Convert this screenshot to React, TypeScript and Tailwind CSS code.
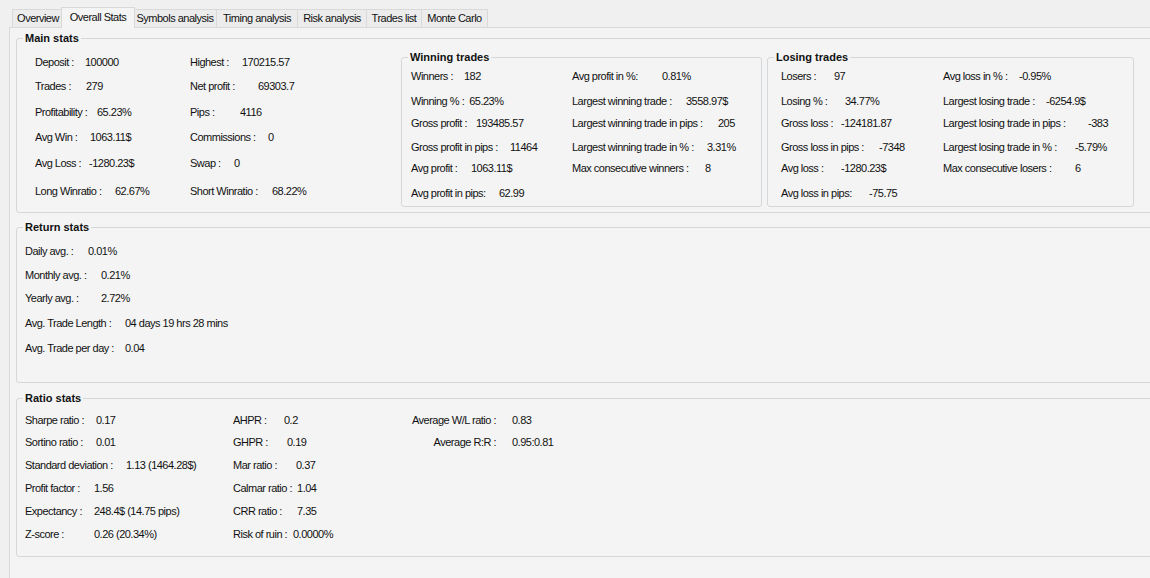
import type { ReactNode } from "react";

type Stat = { label: string; value: string; w: string };

const TABS = [
  { name: "Overview", w: "w-[51px]" },
  { name: "Overall Stats", w: "w-[74px]", active: true },
  { name: "Symbols analysis", w: "w-[83px]" },
  { name: "Timing analysis", w: "w-[81px]" },
  { name: "Risk analysis", w: "w-[69px]" },
  { name: "Trades list", w: "w-[55px]" },
  { name: "Monte Carlo", w: "w-[67px]" },
];

const mainLeft: Stat[] = [
  { label: "Deposit :", value: "100000", w: "min-w-[50px]" },
  { label: "Trades :", value: "279", w: "min-w-[51px]" },
  { label: "Profitability :", value: "65.23%", w: "min-w-[62px]" },
  { label: "Avg Win :", value: "1063.11$", w: "min-w-[55px]" },
  { label: "Avg Loss :", value: "-1280.23$", w: "min-w-[54px]" },
  { label: "Long Winratio :", value: "62.67%", w: "min-w-[80px]" },
];

const mainRight: Stat[] = [
  { label: "Highest :", value: "170215.57", w: "min-w-[52px]" },
  { label: "Net profit :", value: "69303.7", w: "min-w-[68px]" },
  { label: "Pips :", value: "4116", w: "min-w-[50px]" },
  { label: "Commissions :", value: "0", w: "min-w-[78px]" },
  { label: "Swap :", value: "0", w: "min-w-[44px]" },
  { label: "Short Winratio :", value: "68.22%", w: "min-w-[82px]" },
];

const winLeft: Stat[] = [
  { label: "Winners :", value: "182", w: "min-w-[53px]" },
  { label: "Winning % :", value: "65.23%", w: "min-w-[46px]" },
  { label: "Gross profit :", value: "193485.57", w: "min-w-[65px]" },
  { label: "Gross profit in pips :", value: "11464", w: "min-w-[99px]" },
  { label: "Avg profit :", value: "1063.11$", w: "min-w-[60px]" },
  { label: "Avg profit in pips:", value: "62.99", w: "min-w-[88px]" },
];

const winRight: Stat[] = [
  { label: "Avg profit in %:", value: "0.81%", w: "min-w-[90px]" },
  { label: "Largest winning trade :", value: "3558.97$", w: "min-w-[114px]" },
  { label: "Largest winning trade in pips :", value: "205", w: "min-w-[146px]" },
  { label: "Largest winning trade in % :", value: "3.31%", w: "min-w-[135px]" },
  { label: "Max consecutive winners :", value: "8", w: "min-w-[133px]" },
];

const loseLeft: Stat[] = [
  { label: "Losers :", value: "97", w: "min-w-[53px]" },
  { label: "Losing % :", value: "34.77%", w: "min-w-[64px]" },
  { label: "Gross loss :", value: "-124181.87", w: "min-w-[60px]" },
  { label: "Gross loss in pips :", value: "-7348", w: "min-w-[98px]" },
  { label: "Avg loss :", value: "-1280.23$", w: "min-w-[60px]" },
  { label: "Avg loss in pips:", value: "-75.75", w: "min-w-[88px]" },
];

const loseRight: Stat[] = [
  { label: "Avg loss in % :", value: "-0.95%", w: "min-w-[76px]" },
  { label: "Largest losing trade :", value: "-6254.9$", w: "min-w-[103px]" },
  { label: "Largest losing trade in pips :", value: "-383", w: "min-w-[145px]" },
  { label: "Largest losing trade in % :", value: "-5.79%", w: "min-w-[132px]" },
  { label: "Max consecutive losers :", value: "6", w: "min-w-[132px]" },
];

const returns: Stat[] = [
  { label: "Daily avg. :", value: "0.01%", w: "min-w-[63px]" },
  { label: "Monthly avg. :", value: "0.21%", w: "min-w-[76px]" },
  { label: "Yearly avg. :", value: "2.72%", w: "min-w-[76px]" },
  { label: "Avg. Trade Length :", value: "04 days 19 hrs 28 mins", w: "min-w-[100px]" },
  { label: "Avg. Trade per day :", value: "0.04", w: "min-w-[100px]" },
];

const ratioLeft: Stat[] = [
  { label: "Sharpe ratio :", value: "0.17", w: "min-w-[71px]" },
  { label: "Sortino ratio :", value: "0.01", w: "min-w-[71px]" },
  { label: "Standard deviation :", value: "1.13 (1464.28$)", w: "min-w-[101px]" },
  { label: "Profit factor :", value: "1.56", w: "min-w-[69px]" },
  { label: "Expectancy :", value: "248.4$ (14.75 pips)", w: "min-w-[69px]" },
  { label: "Z-score :", value: "0.26 (20.34%)", w: "min-w-[69px]" },
];

const ratioMid: Stat[] = [
  { label: "AHPR :", value: "0.2", w: "min-w-[51px]" },
  { label: "GHPR :", value: "0.19", w: "min-w-[54px]" },
  { label: "Mar ratio :", value: "0.37", w: "min-w-[63px]" },
  { label: "Calmar ratio :", value: "1.04", w: "min-w-[60px]" },
  { label: "CRR ratio :", value: "7.35", w: "min-w-[64px]" },
  { label: "Risk of ruin :", value: "0.0000%", w: "min-w-[60px]" },
];

const ratioRight: Stat[] = [
  { label: "Average W/L ratio :", value: "0.83", w: "w-[103px] text-right" },
  { label: "Average R:R :", value: "0.95:0.81", w: "w-[103px] text-right" },
];

function Column({ items, heights, className = "" }: { items: Stat[]; heights: string[]; className?: string }) {
  return (
    <div className={`flex flex-col ${className}`}>
      {items.map((s, i) => (
        <div key={s.label} className={`flex items-start whitespace-pre ${heights[i]}`}>
          <span className={`inline-block shrink-0 pr-[5px] ${s.w}`}>{s.label}</span>
          <span>{s.value}</span>
        </div>
      ))}
    </div>
  );
}

function GroupBox({ title, className = "", children }: { title: string; className?: string; children: ReactNode }) {
  return (
    <fieldset className={`rounded-[3px] border border-[#d5d8db] p-0 ${className}`}>
      <legend className="ml-[6px] px-[2px] text-[11px] font-bold leading-[14px] tracking-normal">{title}</legend>
      {children}
    </fieldset>
  );
}

export default function App() {
  const mainRows = ["h-[24px]", "h-[26px]", "h-[25px]", "h-[26px]", "h-[28px]", "h-[13px]"];
  const tradeRows = ["h-[25px]", "h-[22px]", "h-[24px]", "h-[21px]", "h-[25px]", "h-[13px]"];
  const returnRows = ["h-[24px]", "h-[23px]", "h-[25px]", "h-[25px]", "h-[13px]"];
  const ratioRows = ["h-[22px]", "h-[23px]", "h-[23px]", "h-[23px]", "h-[23px]", "h-[13px]"];

  return (
    <div className="flex h-[578px] w-[1150px] flex-col overflow-hidden bg-[#f0f0f0] font-['Liberation_Sans',Arial,sans-serif] text-[11px] leading-[13px] tracking-[-0.5px] text-[#111]">
      {/* tab strip */}
      <div className="flex h-[27px] shrink-0 items-end pl-[12px]">
        {TABS.map((t) =>
          t.active ? (
            <div
              key={t.name}
              className={`relative z-10 -mx-[2px] -mb-px flex h-[21px] items-center justify-center border border-b-0 border-[#d9d9d9] bg-[#f4f4f4] pb-[1px] ${t.w}`}
            >
              {t.name}
            </div>
          ) : (
            <div
              key={t.name}
              className={`flex h-[18px] items-center justify-center border-l border-t border-[#d9d9d9] bg-[#ececec] last:border-r ${t.w}`}
            >
              {t.name}
            </div>
          )
        )}
      </div>

      {/* tab page */}
      <div className="ml-[9px] flex w-[1170px] flex-1 flex-col border-l border-t border-[#d9d9d9] bg-[#f4f4f4] pl-[6px]">
        <GroupBox title="Main stats" className="mt-[3px]">
          <div className="flex items-start pb-[5px] pl-[18px] pt-[5px]">
            <div className="mt-[6px] flex w-[366px] shrink-0">
              <Column items={mainLeft} heights={mainRows} className="w-[155px]" />
              <Column items={mainRight} heights={mainRows} />
            </div>
            <GroupBox title="Winning trades" className="w-[361px] shrink-0">
              <div className="flex pb-[6px] pl-[9px] pt-[6px]">
                <Column items={winLeft} heights={tradeRows} className="w-[161px]" />
                <Column items={winRight} heights={tradeRows} />
              </div>
            </GroupBox>
            <GroupBox title="Losing trades" className="ml-[5px] w-[367px] shrink-0">
              <div className="flex pb-[6px] pl-[13px] pt-[6px]">
                <Column items={loseLeft} heights={tradeRows} className="w-[162px]" />
                <Column items={loseRight} heights={tradeRows} />
              </div>
            </GroupBox>
          </div>
        </GroupBox>

        <GroupBox title="Return stats" className="mt-[7px]">
          <div className="pb-[27px] pl-[8px] pt-[11px]">
            <Column items={returns} heights={returnRows} />
          </div>
        </GroupBox>

        <GroupBox title="Ratio stats" className="mt-[8px]">
          <div className="flex pb-[15px] pl-[8px] pt-[9px]">
            <Column items={ratioLeft} heights={ratioRows} className="w-[208px]" />
            <Column items={ratioMid} heights={ratioRows} className="w-[176px]" />
            <div className="flex flex-col">
              {ratioRight.map((s, i) => (
                <div key={s.label} className={`flex items-start whitespace-pre ${ratioRows[i]}`}>
                  <span className={`inline-block shrink-0 pr-[16px] ${s.w}`}>{s.label}</span>
                  <span>{s.value}</span>
                </div>
              ))}
            </div>
          </div>
        </GroupBox>
      </div>
    </div>
  );
}
